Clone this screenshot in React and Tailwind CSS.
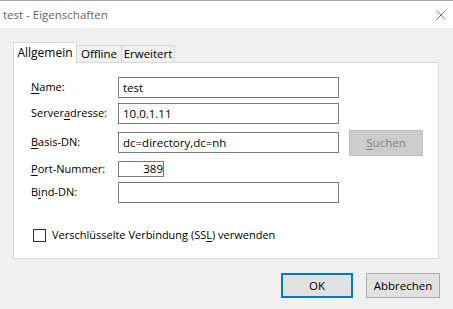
import React from "react";

const U = ({ children }) => <span className="underline underline-offset-2">{children}</span>;

function Row({ label, children, className = "" }) {
  return (
    <div className={"flex items-center " + className}>
      <div className="w-[87px] shrink-0 text-[#000]">{label}</div>
      {children}
    </div>
  );
}

function Input({ value = "", className = "w-[221px] h-[21px]", right = false }) {
  return (
    <div
      className={
        "border border-[#7a7a7a] bg-white flex items-center overflow-hidden " +
        (right ? "justify-end pr-0 " : "pl-[4px] ") +
        className
      }
    >
      <span className="leading-none text-black text-[11.5px]">{value}</span>
    </div>
  );
}

export default function App() {
  return (
    <div
      className="w-[453px] h-[309px] bg-[#f0f0f0] text-[11px] text-black overflow-hidden flex flex-col border-t border-[#a6a6a6]"
      style={{ fontFamily: '"Open Sans", "Noto Sans", sans-serif' }}
    >
      {/* Title bar */}
      <div className="h-[27px] bg-white flex items-center justify-between pl-[3px] pr-[7px] shrink-0">
        <span className="text-[#666] text-[11.5px]">test - Eigenschaften</span>
        <svg width="10" height="10" viewBox="0 0 10 10">
          <path d="M0.5 0.5 L9.5 9.5 M9.5 0.5 L0.5 9.5" stroke="#7a7a7a" strokeWidth="1" />
        </svg>
      </div>

      {/* Tabs */}
      <div className="ml-[13px] mt-[14px] flex items-end h-[20px] relative z-10">
        <div className="h-[21px] w-[64px] bg-white border border-[#d9d9d9] border-b-0 flex items-start justify-center pt-[1px] mb-[-1px]">
          <span className="text-[12px]">Allgemein</span>
        </div>
        <div className="h-[17px] w-[45px] bg-[#f0f0f0] border border-[#d9d9d9] border-l-0 border-b-0 flex items-center justify-center">
          <span className="text-[11.5px]">Offline</span>
        </div>
        <div className="h-[17px] w-[53px] bg-[#f0f0f0] border border-[#d9d9d9] border-l-0 border-b-0 flex items-center justify-center">
          <span className="text-[11.5px]">Erweitert</span>
        </div>
      </div>

      {/* Panel */}
      <div className="ml-[13px] w-[426px] h-[197px] bg-white border border-[#d9d9d9] pl-[17px] pt-[14px] flex flex-col">
        <Row label={<><U>N</U>ame:</>} className="h-[21px]">
          <Input value="test" />
        </Row>
        <Row label={<>Server<U>a</U>dresse:</>} className="h-[21px] mt-[5px]">
          <Input value="10.0.1.11" />
        </Row>
        <Row label={<><U>B</U>asis-DN:</>} className="h-[21px] mt-[8px]">
          <Input value="dc=directory,dc=nh" />
          <div className="ml-[10px] w-[74px] h-[26px] shrink-0 bg-[#cccccc] border border-[#bfbfbf] flex items-center justify-center text-[#838383] text-[11.5px]">
            <span><U>S</U>uchen</span>
          </div>
        </Row>
        <Row label={<><U>P</U>ort-Nummer:</>} className="h-[16px] mt-[8px]">
          <Input value="389" right className="w-[46px] h-[16px]" />
        </Row>
        <Row label={<>B<U>i</U>nd-DN:</>} className="h-[21px] mt-[5px]">
          <Input value="" />
        </Row>
        <div className="flex items-center mt-[24px] ml-[2px] h-[16px]">
          <div className="w-[13px] h-[13px] border border-[#333] bg-white shrink-0" />
          <span className="ml-[6px]">
            Verschlüsselte Verbindung (SS<U>L</U>) verwenden
          </span>
        </div>
      </div>

      {/* Buttons */}
      <div className="flex justify-end mt-[14px] pr-[13px] gap-[13px] text-[11.5px]">
        <div className="w-[72px] h-[25px] bg-[#e1e1e1] border-2 border-[#0078d7] flex items-center justify-center">
          OK
        </div>
        <div className="w-[74px] h-[25px] bg-[#e1e1e1] border border-[#adadad] flex items-center justify-center">
          Abbrechen
        </div>
      </div>
    </div>
  );
}
